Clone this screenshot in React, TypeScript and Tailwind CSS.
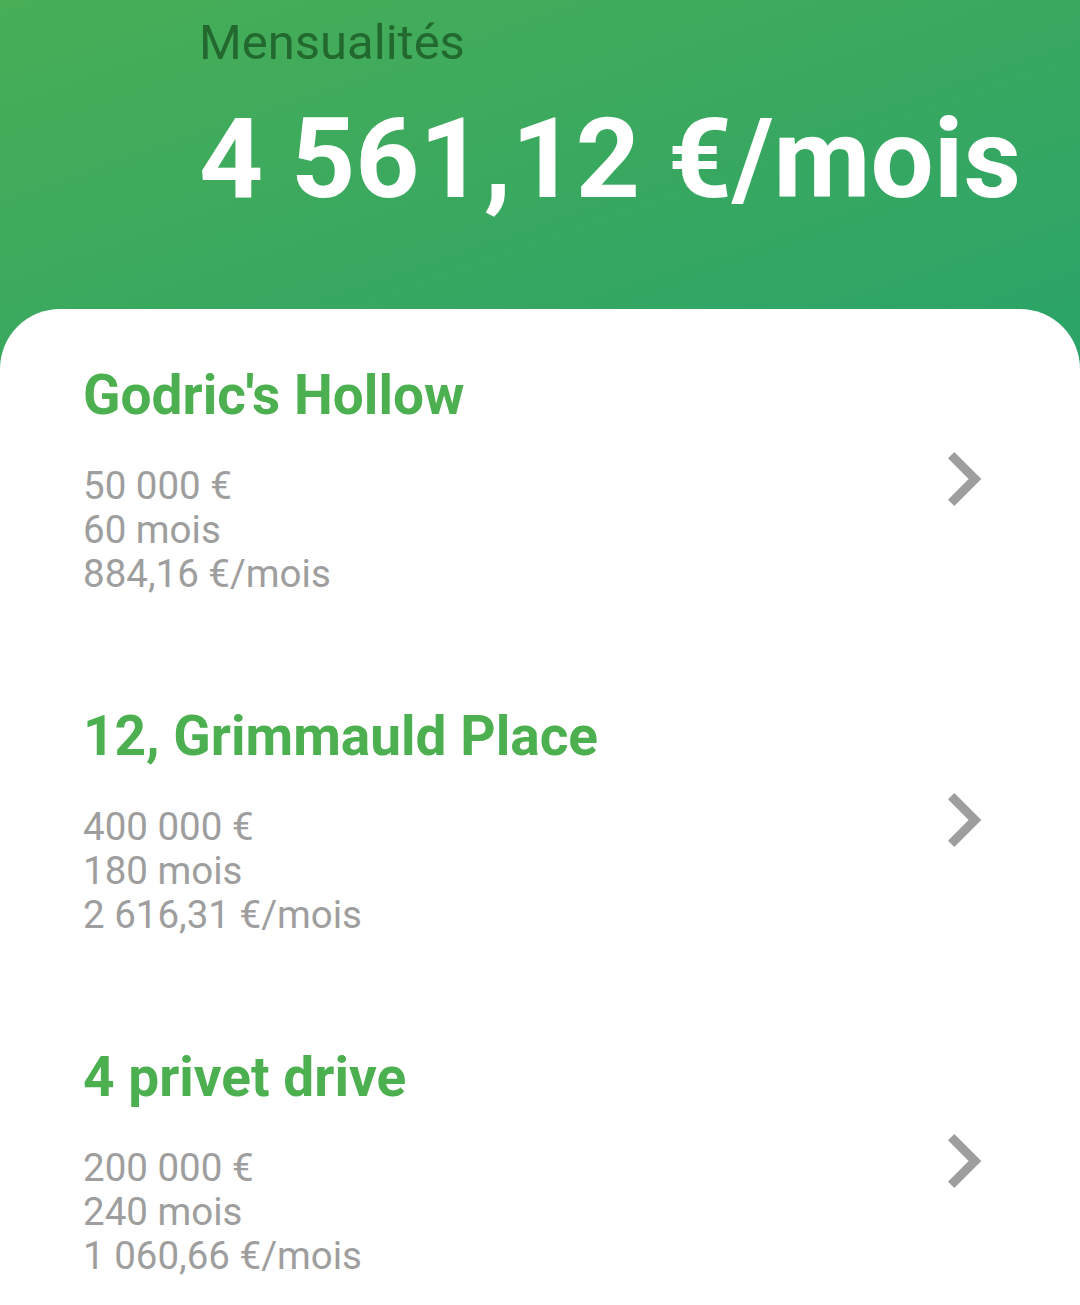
const loans = [
  { name: "Godric's Hollow", amount: "50 000 €", months: "60 mois", monthly: "884,16 €/mois" },
  { name: "12, Grimmauld Place", amount: "400 000 €", months: "180 mois", monthly: "2 616,31 €/mois" },
  { name: "4 privet drive", amount: "200 000 €", months: "240 mois", monthly: "1 060,66 €/mois" },
];

function Chevron() {
  return (
    <svg width="34" height="54" viewBox="0 0 34 54" className="shrink-0">
      <path d="M6.3 0 L0 6.3 L20.6 27 L0 47.7 L6.3 54 L33.3 27 Z" fill="#9e9e9e" />
    </svg>
  );
}

function LoanRow({ loan }: { loan: (typeof loans)[number] }) {
  return (
    <div className="flex items-center">
      <div className="flex-1">
        <div className="text-[55px] leading-[66px] font-bold text-[#4caf50]">{loan.name}</div>
        <div className="mt-[36px] text-[38.5px] leading-[44px] text-[#9e9e9e]">
          <div>{loan.amount}</div>
          <div>{loan.months}</div>
          <div>{loan.monthly}</div>
        </div>
      </div>
      <Chevron />
    </div>
  );
}

export default function App() {
  return (
    <div className="min-h-screen bg-white font-['Roboto',sans-serif]">
      <div className="bg-linear-to-br from-[#47ae56] to-[#29a368] pl-[199px] pt-[14px] pb-[143px]">
        <div className="text-[49px] leading-[58px] text-[#23692f]">Mensualités</div>
        <div className="mt-[20px] text-[112px] leading-[134px] font-bold text-white whitespace-nowrap">
          4 561,12 €/mois
        </div>
      </div>
      <div className="relative -mt-[60px] rounded-t-[60px] bg-white pt-[53px] pl-[83px] pr-[98px] flex flex-col gap-[107px]">
        {loans.map((loan) => (
          <LoanRow key={loan.name} loan={loan} />
        ))}
      </div>
    </div>
  );
}
